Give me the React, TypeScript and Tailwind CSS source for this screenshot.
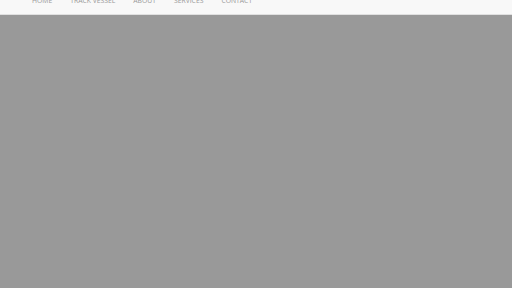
import React from 'react';

const links = ['HOME', 'TRACK VESSEL', 'ABOUT', 'SERVICES', 'CONTACT'];

export default function App() {
  return (
    <div className="w-[512px] h-[288px] overflow-hidden bg-[#999999] flex flex-col" style={{ fontFamily: '"Open Sans", "Liberation Sans", sans-serif' }}>
      <nav className="h-[15px] shrink-0 bg-[#f8f8f8] border-b border-[#e0e0e0] overflow-hidden">
        <ul className="flex gap-[18px] pl-[32px] -mt-[4px]">
          {links.map((l) => (
            <li key={l} className="text-[6.8px] leading-[9px] text-[#9a9a9a]">{l}</li>
          ))}
        </ul>
      </nav>
      <main className="flex-1" />
    </div>
  );
}
